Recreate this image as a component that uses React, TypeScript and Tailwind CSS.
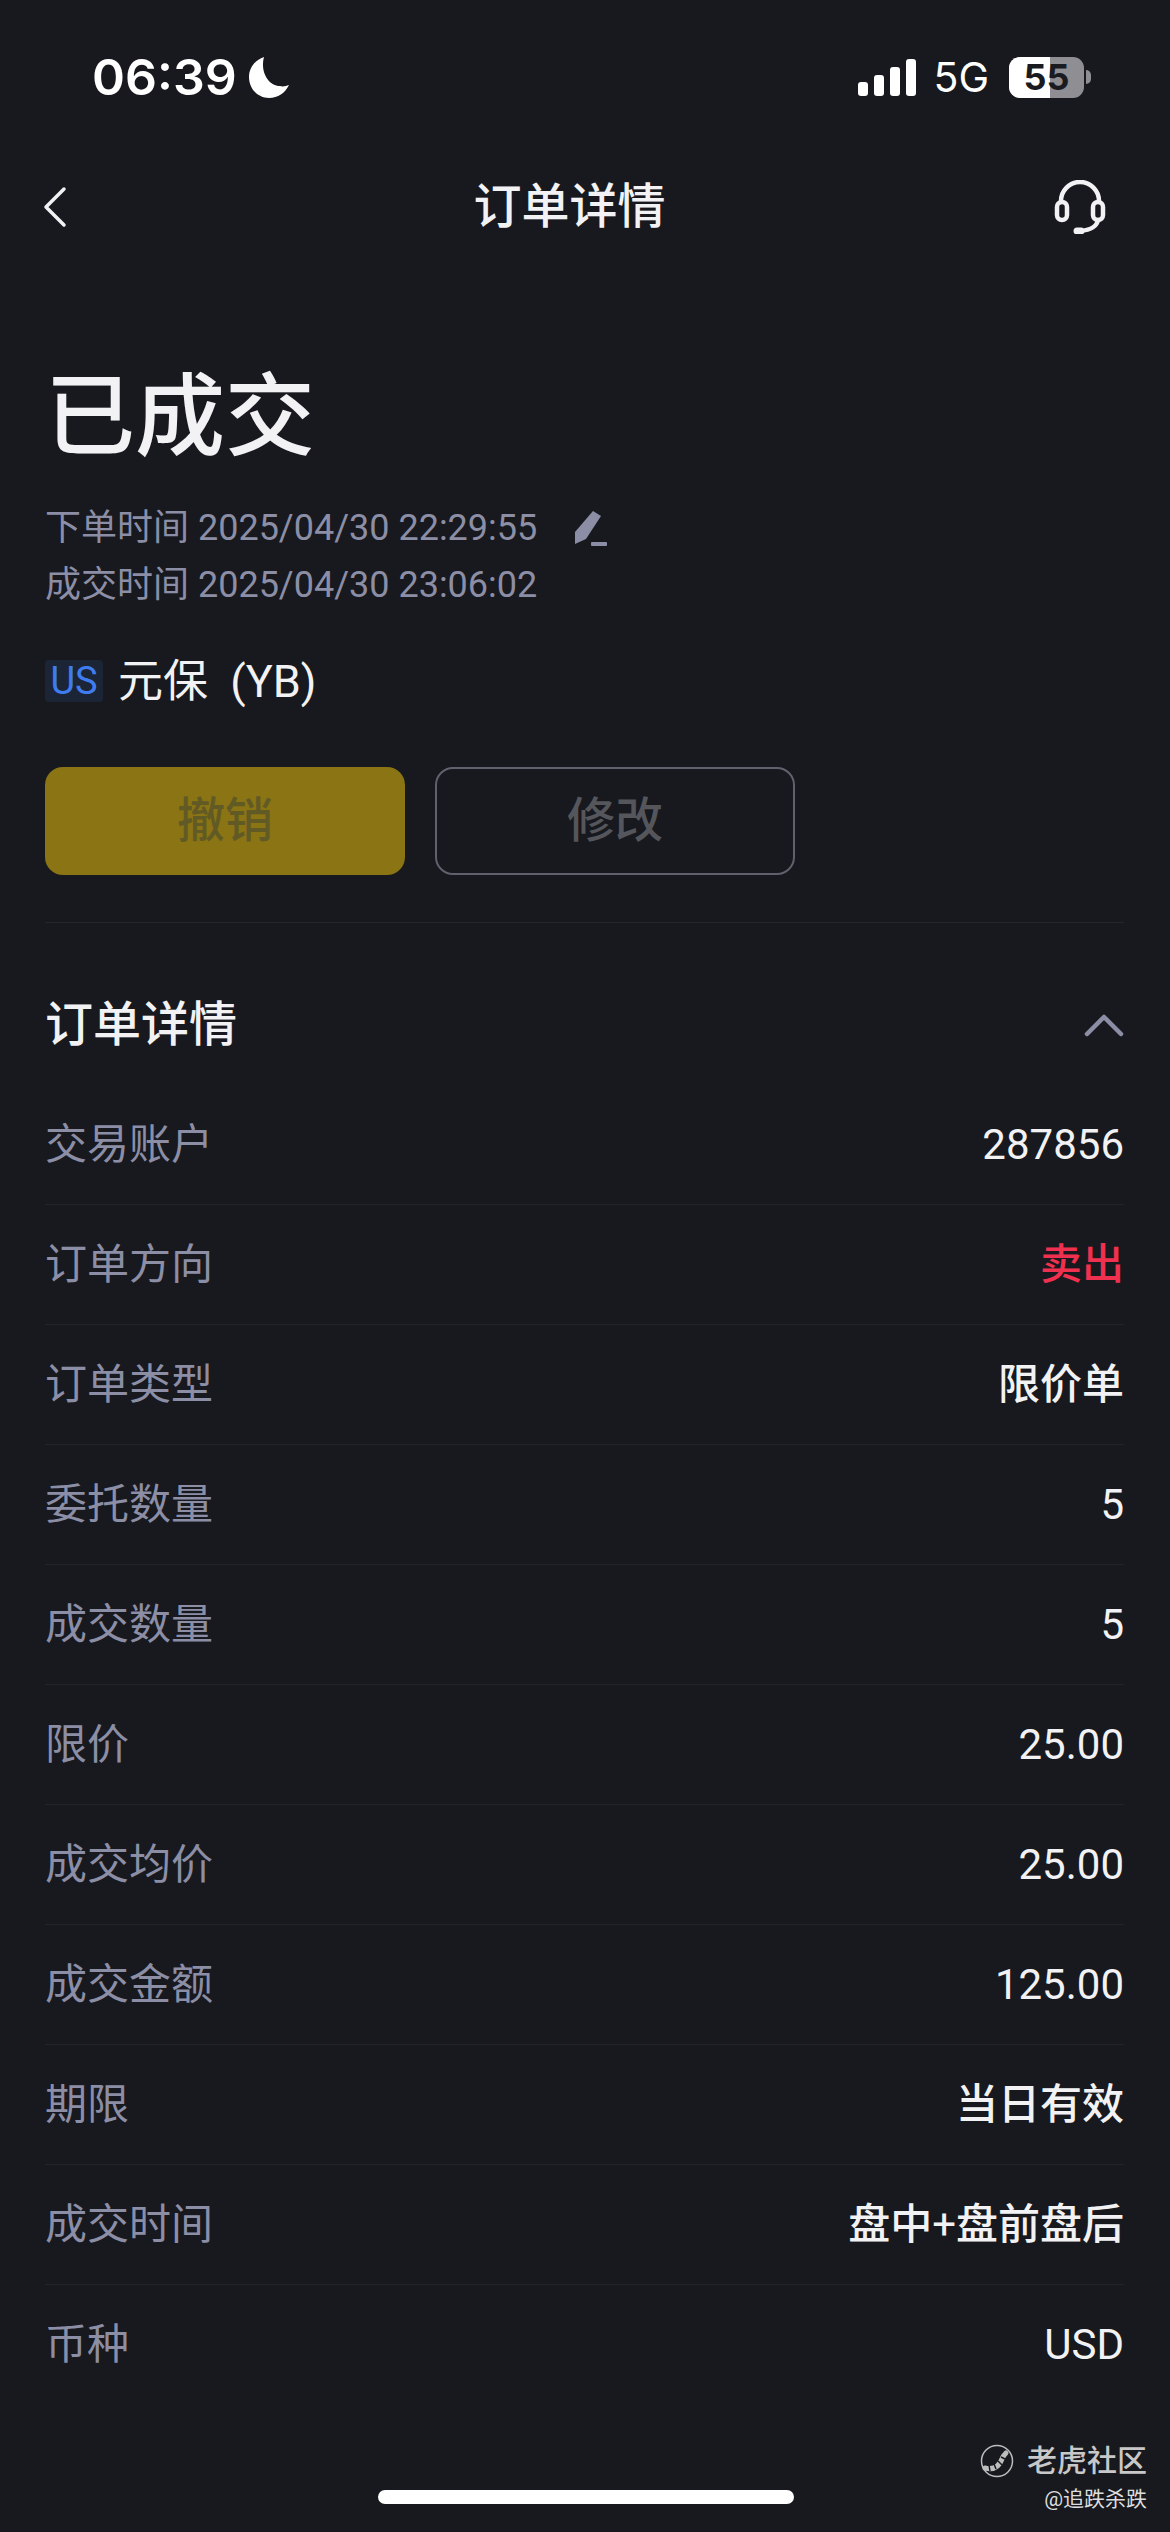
const rows = [
  { label: "交易账户", value: "287856" },
  { label: "订单方向", value: "卖出", red: true },
  { label: "订单类型", value: "限价单" },
  { label: "委托数量", value: "5" },
  { label: "成交数量", value: "5" },
  { label: "限价", value: "25.00" },
  { label: "成交均价", value: "25.00" },
  { label: "成交金额", value: "125.00" },
  { label: "期限", value: "当日有效" },
  { label: "成交时间", value: "盘中+盘前盘后" },
  { label: "币种", value: "USD" },
];

function StatusBar() {
  return (
    <div className="h-[154px] flex items-center justify-between pl-[92px] pr-[79px]">
      <div className="flex items-center gap-[12px] text-white">
        <span className="text-[50px] leading-none font-semibold font-['Inter',sans-serif]">06:39</span>
        <svg width="40" height="42" viewBox="0 0 40 42" fill="#fff">
          <path d="M15 1C6 4 0 12 0 21c0 12 9 21 20 21 9 0 16-5 20-13-3 1-6 2-9 1C19 30 11 15 15 1z" />
        </svg>
      </div>
      <div className="flex items-center">
        <div className="flex items-end gap-[6px] h-[38px]">
          <div className="w-[10px] h-[14px] rounded-[3px] bg-white" />
          <div className="w-[10px] h-[21px] rounded-[3px] bg-white" />
          <div className="w-[10px] h-[29px] rounded-[3px] bg-white" />
          <div className="w-[10px] h-[37px] rounded-[3px] bg-white" />
        </div>
        <span className="ml-[17px] text-[41px] leading-none text-white font-['Inter',sans-serif]">5G</span>
        <div className="ml-[20px] relative w-[75px] h-[41px] rounded-[11px] overflow-hidden bg-[#8e8e93] flex items-center justify-center">
          <div className="absolute left-0 top-0 bottom-0 w-[41px] bg-white" />
          <span className="relative text-[36px] leading-none font-bold text-[#1a1b20] font-['Inter',sans-serif]">55</span>
        </div>
        <div className="ml-[2px] w-[5px] h-[14px] rounded-r-full bg-[#8e8e93]" />
      </div>
    </div>
  );
}

function Header() {
  return (
    <div className="h-[104px] pt-[2px] grid grid-cols-[1fr_auto_1fr] items-center pl-[43px] pr-[64px]">
      <svg width="24" height="42" viewBox="0 0 24 42" fill="none" stroke="#f2f2f4" strokeWidth="3.5" strokeLinecap="round" strokeLinejoin="round">
        <path d="M21 3 3 21l18 18" />
      </svg>
      <span className="ml-[-10px] text-[48px] leading-none text-center whitespace-nowrap font-medium text-[#f2f2f4]">订单详情</span>
      <svg className="justify-self-end" width="52" height="54" viewBox="0 0 52 54" fill="none" stroke="#f2f2f4" strokeWidth="4.5" strokeLinecap="round">
        <path d="M7 22V21a19 19 0 0 1 38 0v1" />
        <rect x="3" y="22" width="10" height="18" rx="5" />
        <rect x="39" y="22" width="10" height="18" rx="5" />
        <path d="M44 40c-1 6-7 10-18 11" />
        <path d="M23 51h4" strokeWidth="7" />
      </svg>
    </div>
  );
}

export default function App() {
  return (
    <div className="relative w-[1170px] h-[2532px] overflow-hidden bg-[#17191e] font-['Roboto','Noto_Sans_CJK_SC',sans-serif]">
      <StatusBar />
      <Header />

      <div className="pl-[45px] pr-[46px]">
        <h1 className="mt-[110px] text-[90px] leading-[100px] font-medium text-[#f2f2f4]">已成交</h1>
        <div className="mt-[31px] flex items-center h-[57px] text-[36px] text-[#8c8ea6]">
          <span>下单时间 2025/04/30 22:29:55</span>
          <svg className="ml-[34px]" width="36" height="36" viewBox="0 0 36 36" fill="#8c8ea6">
            <path d="M22 1l8 5-15 23-11 5 0-12z" />
            <rect x="20" y="32" width="16" height="4" rx="1" />
          </svg>
        </div>
        <div className="h-[57px] flex items-center text-[36px] text-[#8c8ea6]">成交时间 2025/04/30 23:06:02</div>

        <div className="mt-[43px] flex items-center h-[50px]">
          <span className="w-[58px] h-[42px] rounded-[4px] bg-[#1b2535] flex items-center justify-center text-[38px] leading-none text-[#3f7cf0]">US</span>
          <span className="ml-[15px] text-[45px] leading-none text-[#f2f2f4] whitespace-pre">元保  (YB)</span>
        </div>

        <div className="mt-[61px] flex gap-[30px]">
          <button className="w-[360px] h-[108px] rounded-[18px] bg-[#8a7414] text-[48px] font-medium text-[#625a25]">撤销</button>
          <button className="w-[360px] h-[108px] rounded-[18px] border-2 border-[#5f616c] text-[48px] font-medium text-[#55565c]">修改</button>
        </div>
      </div>

      <div className="ml-[45px] mr-[46px] mt-[47px] border-t border-[#24262d]" />

      <div className="mt-[62px] h-[80px] pl-[45px] pr-[46px] flex items-center justify-between">
        <span className="text-[48px] leading-none font-medium text-[#f2f2f4]">订单详情</span>
        <svg width="40" height="24" viewBox="0 0 40 24" fill="none" stroke="#8c8ea6" strokeWidth="4.5" strokeLinecap="round" strokeLinejoin="round">
          <path d="M3 21 20 4l17 17" />
        </svg>
      </div>

      <div className="mt-[20px] ml-[45px] mr-[46px] flex flex-col">
        {rows.map((row, i) => (
          <div
            key={row.label}
            className={`h-[120px] flex items-center justify-between ${i < rows.length - 1 ? "border-b border-[#22242b]" : ""}`}
          >
            <span className="text-[42px] leading-none text-[#8c8ea6]">{row.label}</span>
            <span className={`text-[42px] leading-none font-[450] ${row.red ? "text-[#f0304f]" : "text-[#f2f2f4]"}`}>{row.value}</span>
          </div>
        ))}
      </div>

      <div className="absolute right-[23px] top-[2442px] flex flex-col items-end">
        <div className="flex items-center gap-[13px]">
          <svg width="34" height="34" viewBox="0 0 34 34" fill="none" stroke="#bdbdbd">
            <circle cx="17" cy="17" r="15.5" strokeWidth="1.5" />
            <path d="M5 24c8 2 14-1 17-9 1-3 3-5 4-6" strokeWidth="5" strokeLinecap="round" />
            <path d="M9 21l1 6M14 20l2 5M18 17l4 4M21 13l4 2" stroke="#17191e" strokeWidth="1.5" />
          </svg>
          <span className="text-[30px] leading-[38px] font-medium text-[#c8c8c8]">老虎社区</span>
        </div>
        <span className="mt-[6px] text-[21px] leading-[26px] text-[#dddddd]">@追跌杀跌</span>
      </div>

      <div className="absolute left-[378px] top-[2490px] w-[416px] h-[14px] rounded-full bg-white" />
    </div>
  );
}
